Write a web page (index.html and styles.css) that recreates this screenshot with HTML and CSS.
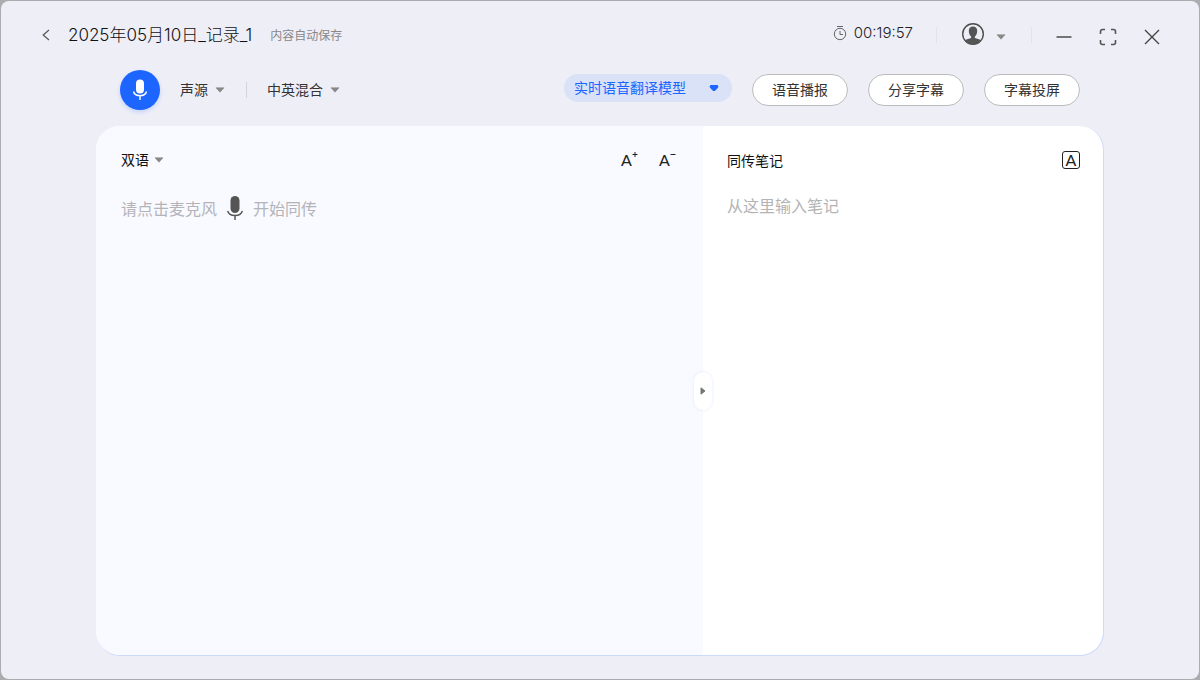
FILE: index.html
```html
<!DOCTYPE html>
<html lang="zh-CN">
<head>
<meta charset="utf-8">
<title>同传记录</title>
<meta name="viewport" content="width=device-width, initial-scale=1">
<link rel="stylesheet" href="styles.css">
</head>
<body>
<div class="window">
  <header class="titlebar">
    <button class="icon-button back" type="button" aria-label="返回">
      <svg width="8" height="12" viewBox="0 0 8 12"><path d="M7 1 1.200 6 7 11" fill="none" stroke="#555" stroke-width="1.200"/></svg>
    </button>
    <h1 class="title">2025年05月10日_记录_1</h1>
    <span class="autosave">内容自动保存</span>
    <div class="timer">
      <svg width="14" height="16" viewBox="0 0 14 16" fill="none" stroke="#666" stroke-width="1"><circle cx="7" cy="9" r="5.700"/><path d="M4 1.500h6M7 6v3.500h3"/></svg>
      <time>00:19:57</time>
    </div>
    <span class="divider"></span>
    <button class="icon-button account" type="button" aria-label="账户">
      <svg width="24" height="24" viewBox="0 0 24 24"><circle cx="12" cy="12" r="10.300" fill="none" stroke="#4c4c4c" stroke-width="1.400"/><path d="M12 4.600c-2.700 0-4.200 1.800-4.200 4.200 0 2.600.9 4.600 2.300 5.600v1.700c-1.800.8-4.500.9-6 2.300C6 21 9 22.500 12 22.500s6-1.500 7.900-4.100c-1.500-1.400-4.200-1.500-6-2.300v-1.700c1.400-1 2.300-3 2.300-5.600 0-2.400-1.500-4.200-4.200-4.200z" fill="#555"/></svg>
      <svg class="caret" width="10" height="6" viewBox="0 0 10 6"><path d="M1 .8h8L5 5.200z" fill="#888" stroke="#888" stroke-width=".6" stroke-linejoin="round"/></svg>
    </button>
    <span class="divider"></span>
    <nav class="window-controls" aria-label="窗口">
      <button class="icon-button" type="button" aria-label="最小化"><svg width="16" height="16" viewBox="0 0 16 16"><path d="M.5 8h15" stroke="#555" stroke-width="1.600"/></svg></button>
      <button class="icon-button" type="button" aria-label="全屏"><svg width="18" height="18" viewBox="0 0 18 18"><path d="M1.500 6V3.500a2 2 0 0 1 2-2H6M12 1.500h2.500a2 2 0 0 1 2 2V6M16.500 12v2.500a2 2 0 0 1-2 2H12M6 16.500H3.500a2 2 0 0 1-2-2V12" fill="none" stroke="#555" stroke-width="1.600"/></svg></button>
      <button class="icon-button" type="button" aria-label="关闭"><svg width="16" height="16" viewBox="0 0 16 16"><path d="m1 1 14 14M15 1 1 15" stroke="#444" stroke-width="1.400"/></svg></button>
    </nav>
  </header>

  <div class="toolbar">
    <button class="mic-button" type="button" aria-label="开始同传">
      <svg width="16" height="24" viewBox="0 0 16 24"><rect x="4" y="1.500" width="8" height="14" rx="4" fill="#fff"/><path d="M1.500 13.500a6.600 5 0 0 0 13 0M8 18v4" fill="none" stroke="#fff" stroke-width="1.400"/></svg>
    </button>
    <label class="picker">
      <select aria-label="声源"><option>声源</option></select>
      <svg class="caret" width="10" height="6" viewBox="0 0 10 6"><path d="M1 .8h8L5 5.200z" fill="#888" stroke="#888" stroke-width=".6" stroke-linejoin="round"/></svg>
    </label>
    <span class="divider"></span>
    <label class="picker">
      <select aria-label="语言"><option>中英混合</option></select>
      <svg class="caret" width="10" height="6" viewBox="0 0 10 6"><path d="M1 .8h8L5 5.200z" fill="#888" stroke="#888" stroke-width=".6" stroke-linejoin="round"/></svg>
    </label>
    <div class="actions">
      <label class="picker model">
        <select aria-label="模型"><option>实时语音翻译模型</option></select>
        <svg class="caret" width="10" height="6" viewBox="0 0 10 6"><path d="M1.500 .5h7l.5 1.500L6 5.500H4L1 2z" fill="#1d65ff" stroke="#1d65ff" stroke-linejoin="round"/></svg>
      </label>
      <button class="pill" type="button">语音播报</button>
      <button class="pill" type="button">分享字幕</button>
      <button class="pill" type="button">字幕投屏</button>
    </div>
  </div>

  <main class="workspace">
    <section class="transcript">
      <div class="panel-head">
        <label class="picker strong">
          <select aria-label="显示语言"><option>双语</option></select>
          <svg class="caret" width="10" height="6" viewBox="0 0 10 6"><path d="M1 .8h8L5 5.200z" fill="#888" stroke="#888" stroke-width=".6" stroke-linejoin="round"/></svg>
        </label>
        <div class="font-tools">
          <button class="font-size" type="button" aria-label="增大字号">A<svg width="6" height="8" viewBox="0 0 6 8"><path d="M.5 4.500h5M3 2v5" stroke="#222"/></svg></button>
          <button class="font-size" type="button" aria-label="减小字号">A<svg width="6" height="8" viewBox="0 0 6 8"><path d="M.5 4.500h5" stroke="#222"/></svg></button>
        </div>
      </div>
      <p class="hint">
        <span>请点击麦克风</span>
        <svg width="16" height="26" viewBox="0 0 16 26"><rect x="3.500" y="1" width="9" height="17" rx="4.500" fill="#555"/><path d="M.7 16a7.400 5.400 0 0 0 14.600 0M8 21v4" fill="none" stroke="#555" stroke-width="1.500"/></svg>
        <span>开始同传</span>
      </p>
    </section>
    <section class="notes">
      <div class="panel-head">
        <label class="notes-title" for="notes">同传笔记</label>
        <button class="format" type="button" aria-label="文字格式">A</button>
      </div>
      <textarea id="notes" placeholder="从这里输入笔记"></textarea>
      <button class="collapse" type="button" aria-label="收起笔记">
        <svg width="6" height="8" viewBox="0 0 6 8"><path d="M1 .8v6.400L5 4z" fill="#777" stroke="#777" stroke-linejoin="round"/></svg>
      </button>
    </section>
  </main>
</div>
</body>
</html>
```
FILE: styles.css
```css
* { box-sizing: border-box; }

body {
  margin: 0;
  height: 100vh;
  padding: 1px;
  background: #acacb0;
  color: #333;
  font: 14px/20px "Noto Sans CJK SC", sans-serif;
}

button, select, textarea {
  margin: 0;
  padding: 0;
  border: 0;
  background: none;
  color: inherit;
  font: inherit;
}

button { cursor: pointer; }
svg { display: block; flex: none; }

.window {
  display: flex;
  flex-direction: column;
  height: 100%;
  border-radius: 8px;
  background: #eeeef7;
}

.titlebar {
  display: flex;
  align-items: center;
  height: 67px;
  padding: 0 25px 0 33px;
}

.icon-button {
  display: flex;
  align-items: center;
  justify-content: center;
  height: 32px;
}

.back { width: 24px; }

.title {
  margin: 0 18px 0 10px;
  color: #111;
  font: 300 17px/24px Inter, "Noto Sans CJK SC", sans-serif;
}

.autosave {
  color: #888;
  font-size: 12px;
}

.timer {
  display: flex;
  align-items: center;
  gap: 7px;
  margin-left: auto;
  padding-bottom: 4px;
  color: #222;
  font: 300 15px/20px Inter, sans-serif;
}

.divider {
  width: 1px;
  height: 16px;
  background: #d4d4dc;
}

.titlebar .divider { margin-left: 23px; background: #e2e2ea; }

.account {
  gap: 11px;
  margin: 0 2px 0 24px;
  padding-bottom: 2px;
}

.account .caret { margin-top: 6px; }

.window-controls {
  display: flex;
  margin-left: 10px;
  padding-top: 4px;
}

.window-controls .icon-button { width: 44px; }

.toolbar {
  display: flex;
  align-items: center;
  padding: 2px 119px 0;
}

.mic-button {
  display: flex;
  align-items: center;
  justify-content: center;
  width: 40px;
  height: 40px;
  margin-right: 20px;
  border-radius: 50%;
  background: #1d65ff;
  box-shadow: 0 2px 4px #1d65ff33;
}

.picker {
  display: inline-flex;
  align-items: center;
  gap: 7px;
}

.picker select {
  appearance: none;
  height: 20px;
  padding-bottom: 2px;
  line-height: 18px;
  outline-offset: 4px;
  cursor: pointer;
}

.toolbar .divider { margin: 0 20px 0 21px; }

.actions {
  display: flex;
  align-items: flex-start;
  gap: 20px;
  margin-left: auto;
}

.model {
  height: 28px;
  gap: 23px;
  padding: 0 13px 0 10px;
  border-radius: 14px;
  background: #d9e2f7;
  color: #1d65ff;
}

.pill {
  height: 32px;
  padding: 0 19px 2px;
  border: 1px solid #bbb;
  border-radius: 16px;
  background: #fff;
}

.workspace {
  display: flex;
  flex: 1;
  min-height: 0;
  margin: 16px 95px 23px;
  border-right: 1px solid #cddafa;
  border-bottom: 1px solid #cddafa;
  border-radius: 24px;
  background: #fff;
}

.transcript {
  flex: 1;
  padding: 24px 28px 24px 25px;
  border-radius: 24px 0 0 24px;
  background: #f9faff;
}

.panel-head {
  display: flex;
  align-items: center;
  justify-content: space-between;
  height: 20px;
}

.strong, .notes-title { color: #111; }
.strong { gap: 5px; }

.font-tools {
  display: flex;
  gap: 22px;
}

.font-size {
  display: flex;
  align-items: flex-start;
  width: 16px;
  color: #222;
  font: 16px/20px Lato, sans-serif;
}

.hint {
  display: flex;
  align-items: center;
  gap: 10px;
  margin: 24px 0 0;
  color: #b4b4b8;
  font-size: 16px;
  line-height: 28px;
}

.notes {
  position: relative;
  display: flex;
  flex-direction: column;
  width: 400px;
  padding: 24px 23px 24px 24px;
}

.format {
  width: 18px;
  height: 18px;
  border: 1px solid #222;
  border-radius: 3px;
  color: #222;
  font: 16px/16px Lato, sans-serif;
}

.notes textarea {
  flex: 1;
  margin-top: 23px;
  outline: 0;
  resize: none;
  font-size: 16px;
  line-height: 24px;
}

.notes textarea::placeholder { color: #b4b4b4; }

.collapse {
  position: absolute;
  top: 50%;
  left: 0;
  display: flex;
  align-items: center;
  justify-content: center;
  width: 18px;
  height: 38px;
  border-radius: 9px;
  background: #fff;
  box-shadow: 0 0 3px #c8d4ff80;
  transform: translate(-50%, -50%);
}
```
